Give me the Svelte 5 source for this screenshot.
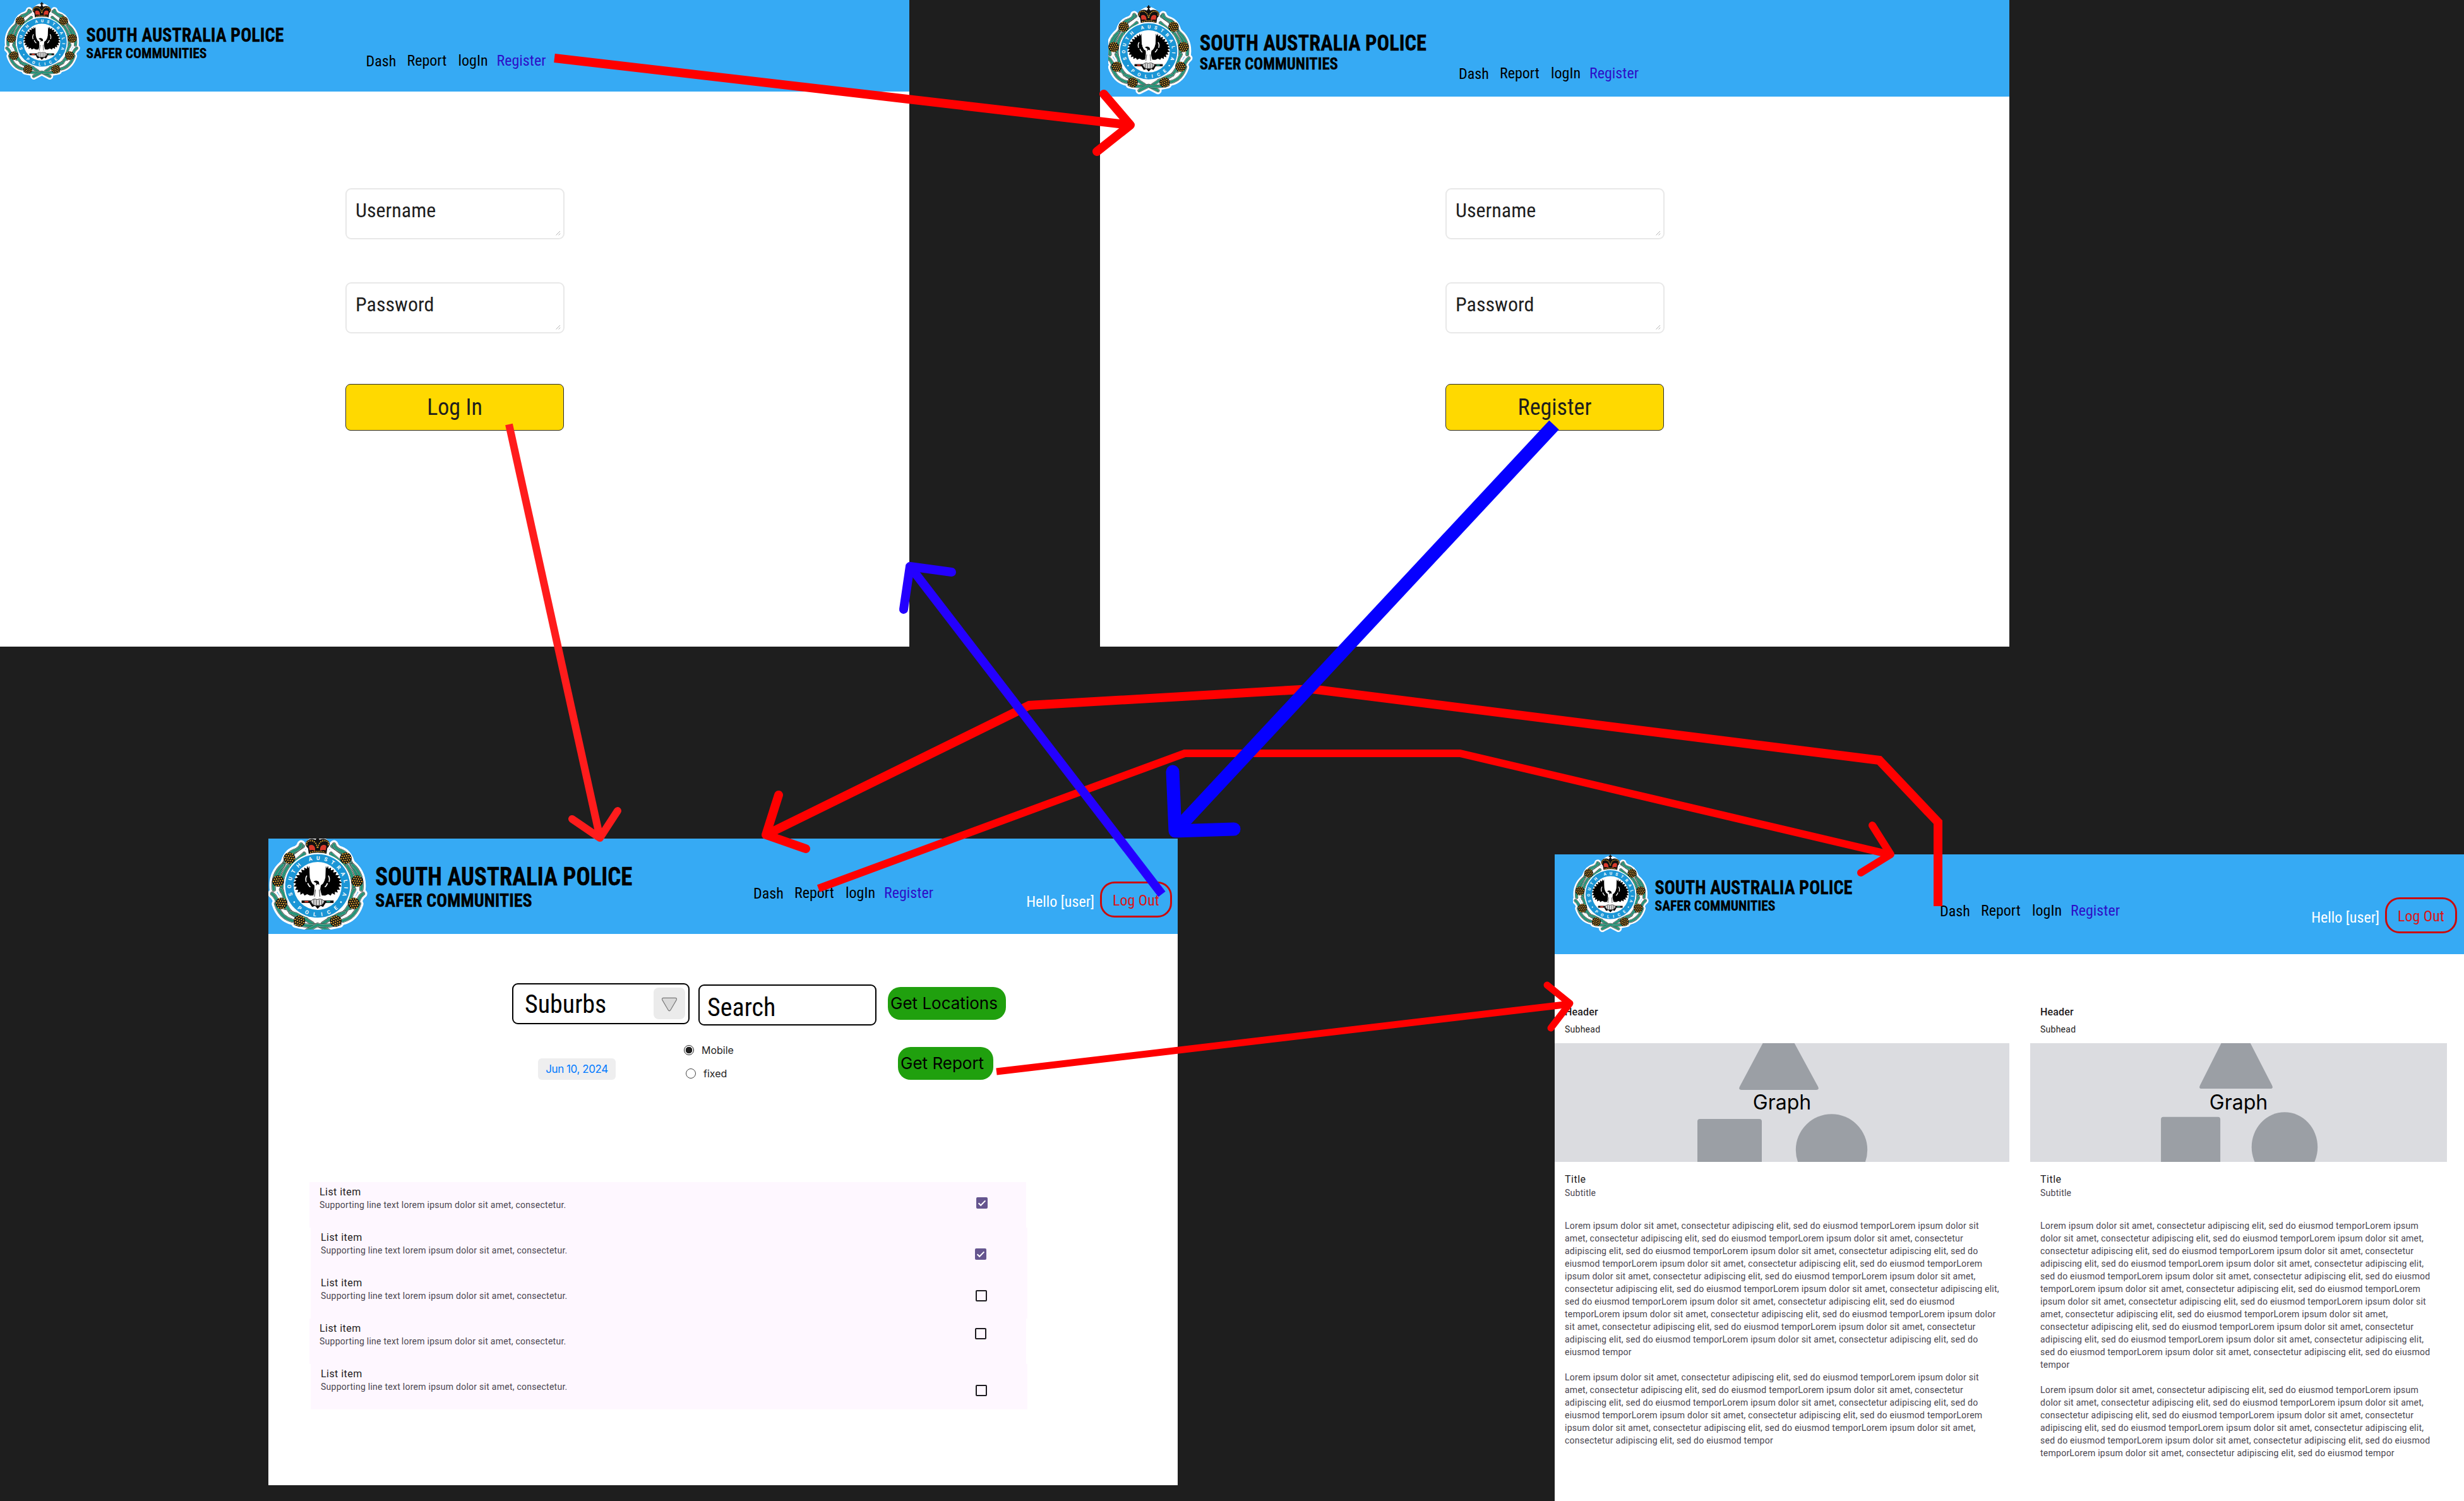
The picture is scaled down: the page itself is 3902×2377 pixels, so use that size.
<script>
  const links = ['Dash', 'Report', 'logIn', 'Register'];

  const phrase = 'Lorem ipsum dolor sit amet, consectetur adipiscing elit, sed do eiusmod tempor';
  const paragraphs = [phrase.repeat(13), phrase.repeat(7)];

  const items = [
    { checked: true, shift: false, top: 24, right: 61 },
    { checked: true, shift: true, top: 33, right: 65 },
    { checked: false, shift: true, top: 27, right: 64 },
    { checked: false, shift: false, top: 15, right: 63 },
    { checked: false, shift: true, top: 33, right: 64 },
  ];

  // Left half of the wreath; the right half is its mirror image.
  const leaves = [
    'M48 196 Q70 110 162 56', 'M100 146 Q140 120 168 92', 'M78 128 Q92 84 132 74 Q150 66 154 48',
    'M24 262 Q16 190 66 146', 'M62 270 Q56 200 92 150', 'M16 282 Q40 300 44 340',
    'M58 262 Q84 300 78 350', 'M34 330 Q56 396 112 410', 'M84 342 Q112 396 176 396',
    'M104 372 Q150 384 208 424', 'M128 424 Q190 440 232 430 L282 456',
  ];
  const clusters = [[98, 113, 8], [44, 222, -6], [60, 328, 6], [146, 412, 20]];
  const berries = [];
  for (let r = -2; r <= 2; r++) {
    const n = 5 - Math.abs(r);
    for (let c = 0; c < n; c++) berries.push([(c - (n - 1) / 2) * 11, r * 10.5]);
  }

  const arrows = [
    { cls: 'red', w: 14, line: '878,92 1790,198', head: '1748,149 1790,198 1737,240' },
    { cls: 'coral', w: 12, line: '806,672 950,1326', head: '906,1297 950,1327 978,1284' },
    { cls: 'red', w: 14, line: '3069,1435 3069,1302 2976,1204 2077,1091 1630,1117 1213,1322', head: '1233,1259 1213,1322 1276,1344' },
    { cls: 'red', w: 12, line: '1296,1407 1876,1193 2312,1193 2992,1353', head: '2965,1307 2994,1353 2947,1382' },
    { cls: 'red', w: 11, line: '1578,1697 2486,1590', head: '2450,1560 2486,1589 2456,1628' },
    { cls: 'blue', w: 21, line: '2461,673 1862,1315', head: '1857,1222 1861,1316 1954,1313' },
    { cls: 'violet', w: 14, line: '1840,1416 1441,897', head: '1431,965 1441,897 1507,906' },
  ];
</script>

{#snippet wreath()}
  <g class="halo">
    {#each leaves as d}<path {d} />{/each}
  </g>
{/snippet}

{#snippet wreathColor()}
  {#each leaves as d}
    <path class="leaf-edge" {d} />
    <path class="leaf-pale" {d} />
    <path class="leaf" {d} />
  {/each}
  {#each clusters as [x, y, a]}
    <g transform="translate({x} {y}) rotate({a})">
      <ellipse rx="28" ry="27" fill="#111" />
      {#each berries as [bx, by]}<circle cx={bx} cy={by} r="3.6" fill="#e2a32f" />{/each}
    </g>
  {/each}
{/snippet}

{#snippet wing()}
  <path d="M193 150 L188 162 L183 149 L180 164 L168 157 L169 171 L154 167 L158 181 L141 178 L147 193 L128 194 L138 205 L120 211 L131 220 L116 229 L130 235 L118 247 L133 250 L125 263 L140 263 L136 277 L150 273 L150 287 L163 280 L170 291 L182 284 L196 291 L212 290 L220 262 L216 240 L200 222 L195 205 Z" />
  <path d="M181 196 Q172 210 178 226 M185 232 Q190 246 198 250" fill="none" stroke="#fff" stroke-width="5" />
{/snippet}

{#snippet logo()}
  <svg class="logo" viewBox="0 0 460 124" role="img" aria-label="South Australia Police">
    <g transform="translate(-0.3 1) scale(0.2564)">
      {@render wreath()}
      <g transform="translate(464 0) scale(-1 1)">{@render wreath()}</g>
      <path d="M232 6 V60 M190 40 Q232 0 274 40 V90 H190 Z" fill="#fff" stroke="#fff" stroke-width="26" stroke-linejoin="round" />
      <ellipse cx="232" cy="250" rx="176" ry="180" fill="#fff" />
      {@render wreathColor()}
      <g transform="translate(464 0) scale(-1 1)">{@render wreathColor()}</g>
      <ellipse cx="232" cy="245" rx="160" ry="157" fill="#fff" />
      <ellipse cx="232" cy="245" rx="154" ry="151" fill="#1b96d6" />
      <ellipse cx="232" cy="245" rx="114" ry="114" fill="#fff" />

      <!-- crown -->
      <path d="M190 92 L186 66 Q164 44 184 28 Q204 16 222 26 L232 12 L242 26 Q260 16 280 28 Q300 44 278 66 L274 92 Q232 82 190 92 Z" fill="#111" />
      <path d="M192 66 Q186 48 206 50 Q222 54 220 78 Q206 72 194 76 Z M272 66 Q278 48 258 50 Q242 54 244 78 Q258 72 270 76 Z" fill="#d93a2b" />
      <path d="M182 52 Q174 30 202 30 Q226 32 231 66 M282 52 Q290 30 262 30 Q238 32 233 66 M196 86 Q232 76 268 86" fill="none" stroke="#e2a32f" stroke-width="5" stroke-dasharray="6 4" />
      <path d="M232 -2 V22 M222 8 H242" stroke="#111" stroke-width="7" />

      <path id="ring-top" d="M 116 294 A 126 124 0 1 1 348 294" fill="none" />
      <path id="ring-bottom" d="M 128 345 A 144 143 0 0 0 336 345" fill="none" />
      <text class="ring"><textPath href="#ring-top" startOffset="5" textLength="484">SOUTH AUSTRALIA</textPath></text>
      <text class="ring"><textPath href="#ring-bottom" startOffset="10" textLength="212">POLICE</textPath></text>
      <circle cx="121" cy="322" r="4" fill="#fff" />
      <circle cx="343" cy="322" r="4" fill="#fff" />

      <!-- piping shrike -->
      {@render wing()}
      <g transform="translate(464 0) scale(-1 1)">{@render wing()}</g>
      <path d="M197 150 Q192 196 200 220 Q206 240 218 240 L214 300 L228 316 L246 300 L244 242 Q258 240 263 222 Q270 196 266 150 Z" fill="#fff" />
      <path d="M212 224 Q226 214 238 226 L240 240 L232 236 L224 244 L226 232 Z" />
      <path d="M222 262 L217 296 M240 262 L243 296" stroke="#333" stroke-width="3" />
      <path d="M156 320 H308" stroke="#111" stroke-width="12" />
      <path d="M170 320 H188" stroke="#d93a2b" stroke-width="7" />
      <path d="M274 320 H292" stroke="#249478" stroke-width="7" />
      <path d="M194 326 L206 345 L220 340 L232 354 L246 340 L258 345 L270 326 Z" />
      <path d="M200 318 Q212 302 230 310 Q250 302 264 318 Q256 342 232 338 Q208 342 200 318 Z" fill="#ddd" stroke="#333" stroke-width="3" />
      <path d="M214 310 V334 M226 312 V338 M240 312 V338 M252 310 V334" stroke="#444" stroke-width="3" />
    </g>
    <text class="brand" x="129.5" y="62.8" font-size="31" textLength="313" lengthAdjust="spacingAndGlyphs">SOUTH AUSTRALIA POLICE</text>
    <text class="brand" x="129.5" y="89" font-size="22.6" textLength="191" lengthAdjust="spacingAndGlyphs">SAFER COMMUNITIES</text>
  </svg>
{/snippet}

{#snippet header(user)}
  <header>
    <div class="brand-box">{@render logo()}</div>
    <nav>
      {#each links as link}<a class={link.toLowerCase()}>{link}</a>{/each}
    </nav>
    {#if user}
      <div class="user"><span>Hello [user]</span><button class="logout">Log Out</button></div>
    {/if}
  </header>
{/snippet}

{#snippet field(label)}
  <div class="field">
    {label}
    <svg viewBox="0 0 8 8"><path d="M0.5 7.5 L7 1 M4.5 7.5 L7.3 4.8" /></svg>
  </div>
{/snippet}

{#snippet form(action)}
  <div class="form">
    {@render field('Username')}
    {@render field('Password')}
    <button class="submit">{action}</button>
  </div>
{/snippet}

{#snippet card(kind)}
  <article class="card {kind}">
    <h3>Header</h3>
    <p class="subhead">Subhead</p>
    <div class="media">
      <svg viewBox="291 0 204 188" preserveAspectRatio="none">
        <path d="M331.7 -4 L293.4 68 Q290 74 296 74 H414 Q420 74 416.6 68 L377.5 -4 Z" />
        <rect x="226" y="120" width="102" height="90" rx="4" />
        <circle cx="438.5" cy="169" r="56.7" />
      </svg>
      <span>Graph</span>
    </div>
    <h4>Title</h4>
    <p class="subtitle">Subtitle</p>
    {#each paragraphs as text}<p class="copy">{text}</p>{/each}
  </article>
{/snippet}

<main class="canvas">
  <section class="board login">
    {@render header(false)}
    {@render form('Log In')}
  </section>

  <section class="board register-page">
    {@render header(false)}
    {@render form('Register')}
  </section>

  <section class="board dash-page">
    {@render header(true)}
    <div class="filters">
      <div class="inputs">
        <div class="box select">
          <span>Suburbs</span>
          <i><svg viewBox="0 0 28 26"><path d="M4 1.5 H24 Q27.5 1.5 26 5 L16 22 Q14 25 12 22 L2 5 Q0.5 1.5 4 1.5 Z" /></svg></i>
        </div>
        <div class="box search">Search</div>
      </div>
      <div class="options">
        <span class="date">Jun 10, 2024</span>
        <div class="radios">
          <label><i class="radio on"></i>Mobile</label>
          <label class="second"><i class="radio"></i>fixed</label>
        </div>
      </div>
      <div class="actions">
        <button class="go locations">Get Locations</button>
        <button class="go report-btn">Get Report</button>
      </div>
    </div>
    <ul>
      {#each items as item}
        <li class:shift={item.shift}>
          <div>
            <strong>List item</strong>
            <span>Supporting line text lorem ipsum dolor sit amet, consectetur.</span>
          </div>
          <i class="check" class:on={item.checked} style="margin-top: {item.top}px; margin-right: {item.right}px">
            {#if item.checked}<svg viewBox="0 0 18 18"><path d="M3.6 9.2 L7.2 12.8 L14.4 5.4" /></svg>{/if}
          </i>
        </li>
      {/each}
    </ul>
  </section>

  <section class="board report-page">
    {@render header(true)}
    <div class="cards">
      {@render card('wide')}
      {@render card('narrow')}
    </div>
  </section>

  <svg class="arrows" viewBox="0 0 3902 2377">
    {#each arrows as a}
      <g class={a.cls} stroke-width={a.w}>
        <polyline points={a.line} />
        <polyline class="head" points={a.head} />
      </g>
    {/each}
  </svg>
</main>

<style>
  :global(body) { margin: 0; background: #1e1e1e; }
  .canvas {
    position: relative; width: 3902px; height: 2377px; overflow: hidden;
    background: #1e1e1e; color: #000; font-family: Roboto, "Liberation Sans", sans-serif;
  }
  h3, h4, p, ul { margin: 0; padding: 0; }
  button { font: inherit; padding: 0; border: 0; box-sizing: border-box; color: inherit; background: none; }
  i { display: block; font-style: normal; box-sizing: border-box; }

  /* artboards on the canvas */
  .board { position: absolute; width: 1440px; height: 1024px; background: #fff; overflow: hidden; }
  .login { left: 0; top: 0; }
  .register-page { left: 1742px; top: 0; }
  .dash-page { left: 425px; top: 1328px; }
  .report-page { left: 2462px; top: 1353px; height: 1024px; }

  header {
    display: grid; grid-template-columns: 579.5px auto 1fr; align-items: start;
    box-sizing: border-box; height: 145px; background: #36aaf4;
    font: 400 24px/28px "Roboto Condensed", Roboto, sans-serif; font-stretch: 75%;
  }
  .brand-box { overflow: hidden; }
  .logo { display: block; width: 460px; overflow: visible; }
  .login .brand-box { margin: 3px 0 0 7px; }
  .register-page header { height: 153px; grid-template-columns: 568px auto 1fr; }
  .register-page .brand-box { margin: 8px 0 0 13px; }
  .register-page .logo { width: 528.1px; margin-left: -3.6px; }
  .dash-page header { height: 151px; grid-template-columns: 768px auto 1fr; }
  .dash-page .brand-box { height: 144px; }
  .dash-page .logo { width: 598px; margin-top: -8px; margin-left: 0.5px; }
  .report-page header { height: 158px; grid-template-columns: 610px auto 1fr; }
  .report-page .brand-box { margin: 0 0 0 29px; }

  nav { display: grid; grid-template-columns: 65px 81px 61px 90px; margin-top: 82px; }
  .register-page nav { margin-top: 102px; }
  .dash-page nav { margin-top: 72px; }
  .report-page nav { margin-top: 75px; }
  .dash { padding-top: 1px; }
  .register { color: #2d0fc8; }
  .user { display: flex; justify-content: flex-end; align-items: flex-start; gap: 9px; padding: 68px 9px 0 0; color: #fff; }
  .report-page .user { padding-right: 11px; }
  .user span { margin-top: 18px; }
  .logout { width: 114px; height: 57px; border: 3px solid #cc0a0a; border-radius: 23px; color: #dc1414; padding-top: 3px; }

  .brand { font-family: "Roboto Condensed", Roboto, sans-serif; font-weight: 700; font-stretch: 75%; stroke: #000; stroke-width: 0.3; }
  .ring { font: 700 25px Roboto, sans-serif; fill: #fff; }
  .halo path { fill: none; stroke: #fff; stroke-width: 40; stroke-linecap: round; }
  .leaf-edge, .leaf-pale, .leaf { fill: none; stroke-linecap: round; }
  .leaf-edge { stroke: #222; stroke-width: 19; }
  .leaf-pale { stroke: #9fb0a8; stroke-width: 16; }
  .leaf { stroke: #249478; stroke-width: 12; }

  /* sign-in and register forms */
  .form {
    display: flex; flex-direction: column; width: 347px; margin: 153px 0 0 547px;
    color: #1e1e1e; font: 400 32px/38px "Roboto Condensed", Roboto, sans-serif; font-stretch: 75%;
  }
  .register-page .form { margin-top: 145px; }
  .field {
    display: flex; justify-content: space-between; box-sizing: border-box; height: 81px; margin-bottom: 68px;
    padding: 13.5px 4px 4px 14px; border: 2px solid #e8e8e8; border-radius: 9px;
  }
  .field svg { align-self: flex-end; width: 8px; height: 8px; fill: none; stroke: #aaa; stroke-width: 0.9; }
  .submit { width: 346px; height: 74px; margin-top: 12px; border: 1px solid #2c2c2c; border-radius: 8px; background: #ffd900; font-size: 36px; line-height: 70px; }

  /* dashboard filters */
  .filters { display: flex; height: 393px; padding-left: 386px; }
  .inputs, .options { display: flex; }
  .inputs { width: 595px; gap: 14px; padding-top: 78px; font: 400 40px/48px "Roboto Condensed", Roboto, sans-serif; font-stretch: 75%; }
  .box { box-sizing: border-box; width: 281px; height: 65px; border: 2px solid #000; border-radius: 9px; }
  .select { display: flex; justify-content: space-between; padding: 8px 5px 0 18px; }
  .select i { width: 50px; height: 50px; margin-top: -3px; padding: 15px 12px; border-radius: 8px; background: #ebebeb; }
  .select svg { display: block; width: 26px; fill: #d9d9d9; stroke: #777; stroke-width: 1.2; }
  .search { width: 282px; margin-top: 2px; padding: 11px 0 0 12px; }
  .options { width: 0; }
  .date {
    flex: none; width: 123px; height: 34px; margin: 197px 0 0 -554px; border-radius: 6px; background: #eeeeef;
    color: #007aff; text-align: center; font: 400 17px/34px Inter, sans-serif; letter-spacing: -0.43px;
  }
  .radios { flex: none; margin: 176px 0 0 108px; color: #1e1e1e; font: 400 16px/16px Inter, sans-serif; }
  label { display: flex; gap: 12px; }
  .second { margin: 21px 0 0 3px; }
  .radio { width: 16px; height: 16px; border: 1px solid #444; border-radius: 50%; background: #fff; }
  .radio.on { border-color: #1e1e1e; background: radial-gradient(circle, #1e1e1e 5px, #fff 5.6px); }
  .actions { flex: none; display: flex; flex-direction: column; padding-top: 84px; font: 400 26px/48px Inter, sans-serif; }
  .go { height: 52px; border-radius: 20px; background: #20a00e; text-align: left; padding-left: 4px; white-space: nowrap; }
  .locations { width: 187px; }
  .report-btn { width: 151px; margin: 43px 0 0 16px; }

  ul { width: 1135px; margin-left: 65px; list-style: none; }
  li { display: flex; justify-content: space-between; align-items: flex-start; height: 72px; background: #fef7ff; }
  .shift { margin: 0 -2px 0 2px; }
  li div { display: flex; flex-direction: column; padding: 3.5px 0 0 16px; }
  li strong { color: #1d1b20; font: 400 16px/24px Roboto, sans-serif; letter-spacing: 0.45px; }
  li span { margin-top: -1.5px; color: #49454f; font: 400 14px/20px Roboto, sans-serif; letter-spacing: 0.26px; }
  .check { width: 18px; height: 18px; border: 2px solid #1d1b20; border-radius: 2px; }
  .check.on { border: 0; background: #65558f; }
  .check svg { display: block; fill: none; stroke: #fff; stroke-width: 2; }

  /* report cards */
  .cards { display: flex; gap: 33px; padding-top: 80px; }
  .card { width: 720px; color: #49454f; font: 400 14px/20px Roboto, sans-serif; letter-spacing: 0.25px; }
  .narrow { width: 660px; }
  .card h3, .card h4, .card p { padding: 0 16px; }
  .card h3 { color: #1d1b20; font: 500 16px/24px Roboto, sans-serif; letter-spacing: 0.15px; }
  .card h4 { margin-top: 16px; color: #1d1b20; font: 400 16px/24px Roboto, sans-serif; letter-spacing: 0.5px; }
  .card .subhead { margin-top: 5px; color: #1d1b20; }
  .media { display: grid; height: 188px; margin-top: 12px; background: #dbdce0; overflow: hidden; place-items: start center; }
  .media svg, .media span { grid-area: 1 / 1; }
  .media svg { width: 204px; height: 188px; justify-self: start; margin-left: 291px; overflow: visible; fill: #9b9fa5; }
  .narrow .media svg { width: 188px; height: 183px; margin-left: 267px; }
  .media span { margin-top: 74px; color: #000; font: 400 32px/39px Inter, sans-serif; letter-spacing: 0; }
  .card .subtitle { margin-top: -1px; }
  .card .copy { margin-top: 20px; color: #49454f; }
  .subtitle + .copy { margin-top: 32px; }

  /* flow arrows above the artboards */
  .arrows { position: absolute; inset: 0; width: 3902px; height: 2377px; fill: none; }
  .head { stroke-linecap: round; stroke-linejoin: round; }
  .red { stroke: #f00; }
  .coral { stroke: #ff1c1c; }
  .blue { stroke: #0600ff; }
  .violet { stroke: #2400ff; }
</style>
